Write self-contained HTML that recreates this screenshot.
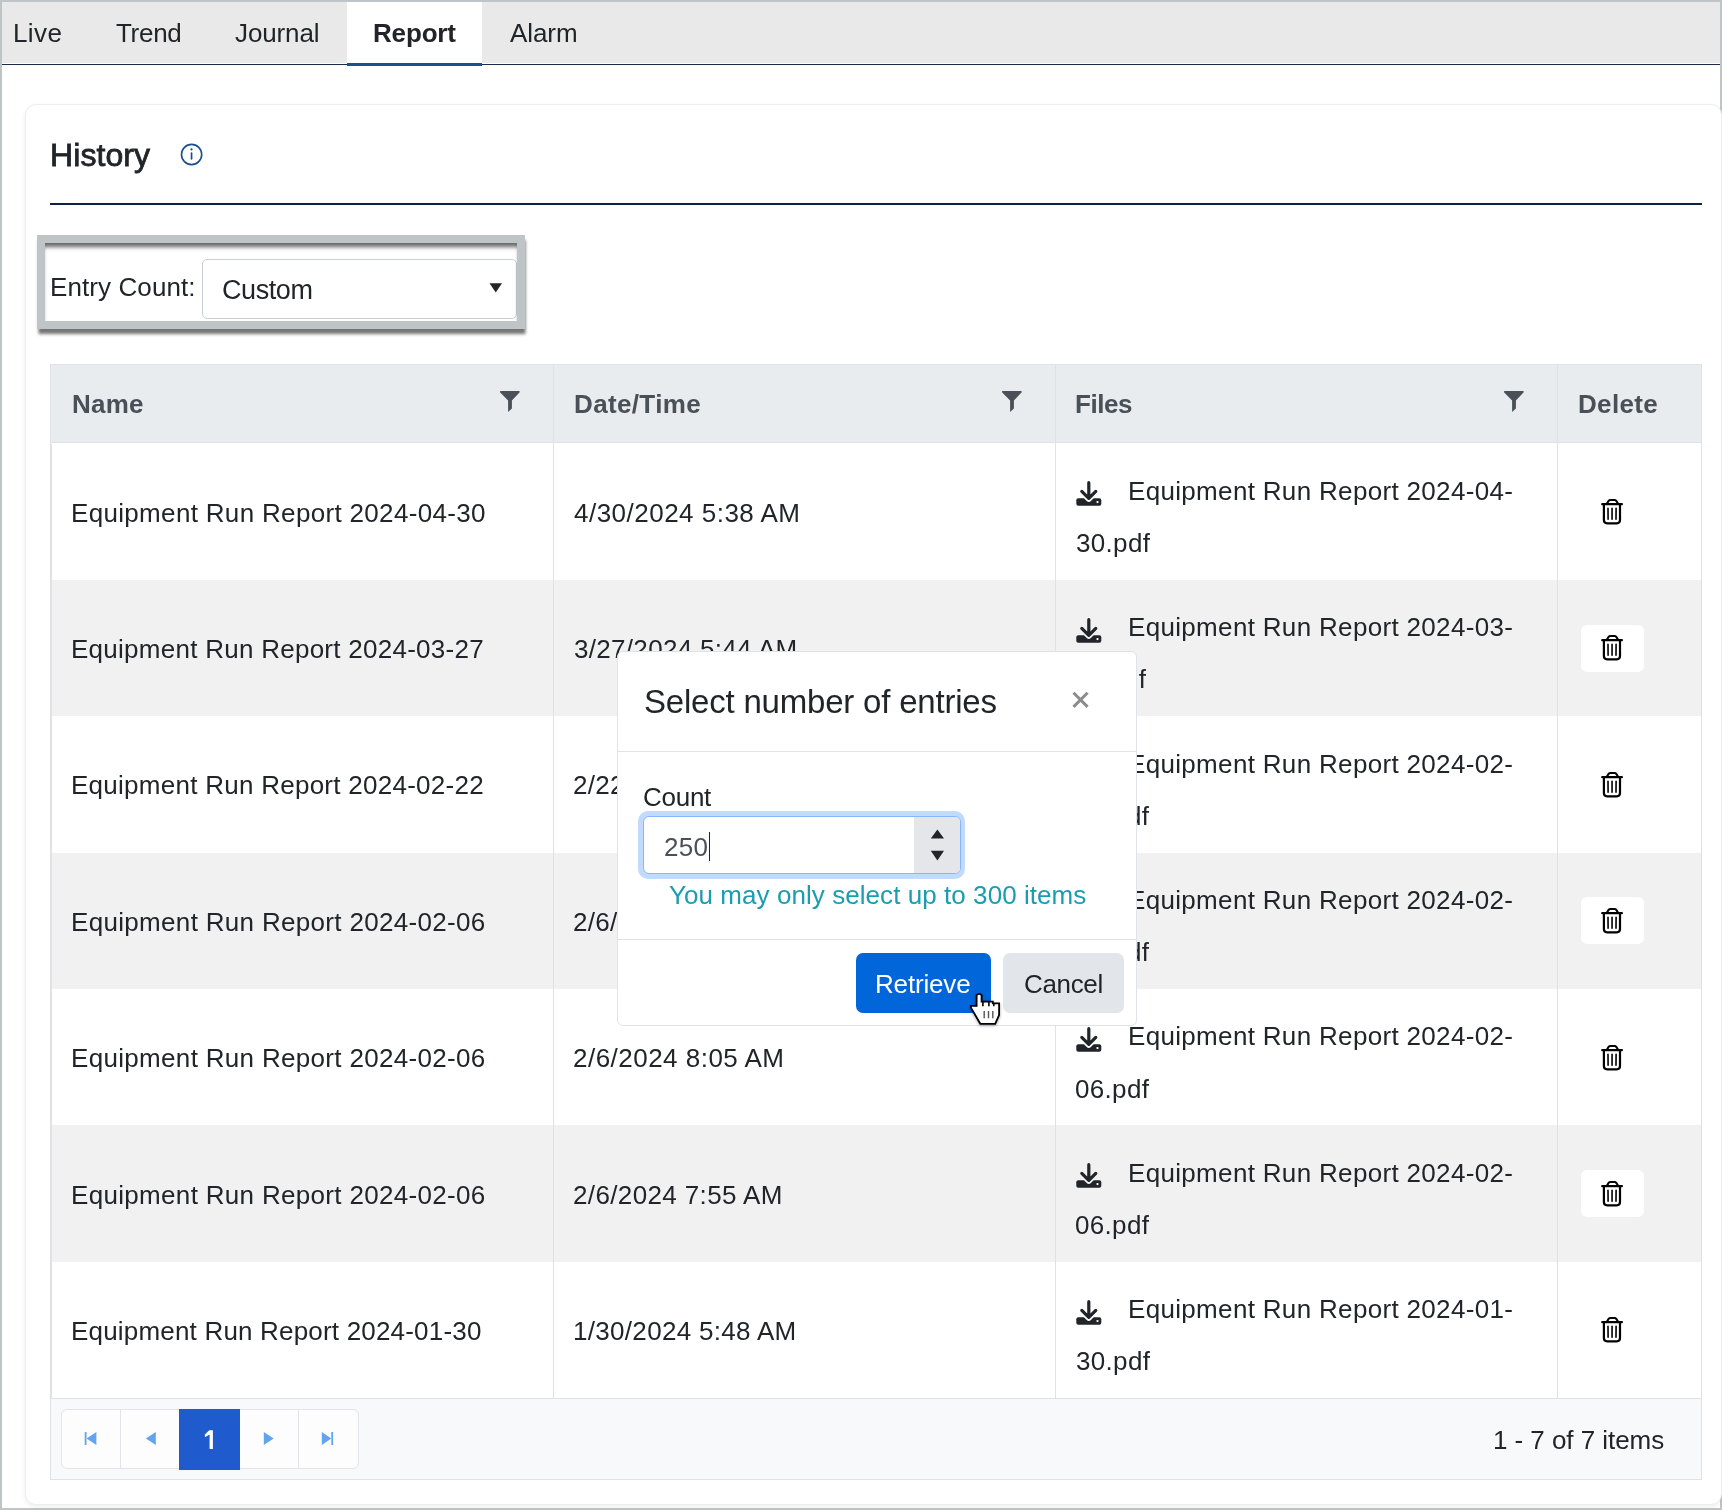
<!DOCTYPE html>
<html><head><meta charset="utf-8">
<style>
html,body{margin:0;padding:0;}
body{width:1722px;height:1510px;position:relative;overflow:hidden;background:#bfc4c7;font-family:"Liberation Sans",sans-serif;}
.a{position:absolute;}
.t{position:absolute;white-space:pre;font-family:"Liberation Sans",sans-serif;-webkit-font-smoothing:antialiased;will-change:transform;}
svg{position:absolute;overflow:visible;}
</style></head><body>
<div class="a" style="left:2px;top:2px;width:1718px;height:1506px;background:#fff;"></div>
<!-- tab bar -->
<div class="a" style="left:2px;top:2px;width:1718px;height:61px;background:#e9e9e9;"></div>
<div class="a" style="left:2px;top:64px;width:1718px;height:1px;background:#1c2b47;"></div>
<div class="a" style="left:347px;top:2px;width:135px;height:61px;background:#fff;"></div>
<div class="a" style="left:347px;top:63px;width:135px;height:3px;background:#1a5190;"></div>
<!-- card -->
<div class="a" style="left:25px;top:103.5px;width:1697px;height:1401px;box-sizing:border-box;border:1px solid #eceef0;border-radius:11px;box-shadow:0 2px 5px rgba(0,0,0,0.07);background:#fff;"></div>
<!-- info icon -->
<svg style="left:0;top:0" width="1" height="1"><circle cx="191.6" cy="154.5" r="10.1" fill="none" stroke="#1a4f8f" stroke-width="1.6"/><circle cx="191.5" cy="149.4" r="1.1" fill="#1a4f8f"/><rect x="190.7" y="152.3" width="1.7" height="7.4" rx=".8" fill="#1a4f8f"/></svg>
<!-- divider -->
<div class="a" style="left:50px;top:203px;width:1652px;height:2px;background:#0d2240;"></div>
<!-- entry count select -->
<div class="a" style="left:202px;top:259px;width:315px;height:59.5px;box-sizing:border-box;border:1px solid #c9cfd7;border-radius:5px;background:#fff;"></div>
<svg style="left:0;top:0" width="1" height="1"><path d="M489.5 283.2 L502 283.2 L495.75 292.4 Z" fill="#212529"/></svg>
<!-- frame -->
<div class="a" style="left:37px;top:235px;width:487.5px;height:94px;box-sizing:border-box;border:8px solid #bfc4c6;box-shadow:inset 0 6px 4px -2px rgba(0,0,0,0.6), 0.5px 5px 3px rgba(0,0,0,0.55);"></div>
<!-- table -->
<div class="a" style="left:50px;top:364px;width:1652px;height:1116px;box-sizing:border-box;border:1px solid #dee2e6;background:#fff;"></div>
<div class="a" style="left:51px;top:365px;width:1650px;height:77px;background:#e9ecef;"></div>
<div class="a" style="left:51px;top:442px;width:1650px;height:2px;background:#dee2e6;"></div>
<div class="a" style="left:51px;top:443.4px;width:1650px;height:136.4px;background:#ffffff;"></div>
<div class="a" style="left:51px;top:579.8px;width:1650px;height:136.4px;background:#f1f1f1;"></div>
<div class="a" style="left:51px;top:716.2px;width:1650px;height:136.4px;background:#ffffff;"></div>
<div class="a" style="left:51px;top:852.6px;width:1650px;height:136.4px;background:#f1f1f1;"></div>
<div class="a" style="left:51px;top:989.0px;width:1650px;height:136.4px;background:#ffffff;"></div>
<div class="a" style="left:51px;top:1125.4px;width:1650px;height:136.4px;background:#f1f1f1;"></div>
<div class="a" style="left:51px;top:1261.8px;width:1650px;height:136.2px;background:#ffffff;"></div>
<div class="a" style="left:51px;top:444px;width:1px;height:954px;background:#e0e2e4;"></div>
<div class="a" style="left:553px;top:365px;width:1px;height:1033px;background:#dee2e6;"></div>
<div class="a" style="left:1055px;top:365px;width:1px;height:1033px;background:#dee2e6;"></div>
<div class="a" style="left:1557px;top:365px;width:1px;height:1033px;background:#dee2e6;"></div>
<div class="a" style="left:51px;top:1398px;width:1650px;height:1px;background:#dee2e6;"></div>
<div class="a" style="left:51px;top:1399px;width:1650px;height:80px;background:#f8f9fa;"></div>
<svg style="left:1076px;top:480.3px" width="26" height="26" viewBox="0 0 26 26"><defs><mask id="m0"><rect x="-2" y="-2" width="30" height="30" fill="#fff"/><path d="M5.8 11.4 L12.8 18.4 L19.8 11.4" stroke="#000" stroke-width="6.6" fill="none" stroke-linecap="round" stroke-linejoin="round"/></mask></defs><rect x="0.3" y="18.2" width="25" height="7.6" rx="2" fill="#212529" mask="url(#m0)"/><circle cx="21.5" cy="22.1" r="1.15" fill="#fff"/><path d="M12.8 2.7 V16.5 M5.8 11.4 L12.8 18.4 L19.8 11.4" stroke="#212529" stroke-width="3.2" fill="none" stroke-linecap="round" stroke-linejoin="round"/></svg>
<svg style="left:1601px;top:499.0px" width="22" height="26" viewBox="0 0 22 26" fill="none" stroke="#000"><path d="M1.2 5.2 H20.9" stroke-width="2.2" stroke-linecap="round"/><path d="M5.6 5 L7.6 1.9 Q8.3 1 9.4 1 H13.5 Q14.6 1 15.3 1.9 L17.3 5" stroke-width="2"/><path d="M2.9 6 V21 Q2.9 24.3 6.2 24.3 H15.7 Q19 24.3 19 21 V6" stroke-width="2.2"/><path d="M7 9.3 L7.1 20.3 M11.05 9.3 V20.3 M15.1 9.3 L15 20.3" stroke-width="1.6" stroke-linecap="round"/></svg>
<div class="a" style="left:1581px;top:624.5px;width:63px;height:47px;border-radius:6px;background:#fff;"></div>
<svg style="left:1076px;top:616.7px" width="26" height="26" viewBox="0 0 26 26"><defs><mask id="m1"><rect x="-2" y="-2" width="30" height="30" fill="#fff"/><path d="M5.8 11.4 L12.8 18.4 L19.8 11.4" stroke="#000" stroke-width="6.6" fill="none" stroke-linecap="round" stroke-linejoin="round"/></mask></defs><rect x="0.3" y="18.2" width="25" height="7.6" rx="2" fill="#212529" mask="url(#m1)"/><circle cx="21.5" cy="22.1" r="1.15" fill="#fff"/><path d="M12.8 2.7 V16.5 M5.8 11.4 L12.8 18.4 L19.8 11.4" stroke="#212529" stroke-width="3.2" fill="none" stroke-linecap="round" stroke-linejoin="round"/></svg>
<svg style="left:1601px;top:635.4px" width="22" height="26" viewBox="0 0 22 26" fill="none" stroke="#000"><path d="M1.2 5.2 H20.9" stroke-width="2.2" stroke-linecap="round"/><path d="M5.6 5 L7.6 1.9 Q8.3 1 9.4 1 H13.5 Q14.6 1 15.3 1.9 L17.3 5" stroke-width="2"/><path d="M2.9 6 V21 Q2.9 24.3 6.2 24.3 H15.7 Q19 24.3 19 21 V6" stroke-width="2.2"/><path d="M7 9.3 L7.1 20.3 M11.05 9.3 V20.3 M15.1 9.3 L15 20.3" stroke-width="1.6" stroke-linecap="round"/></svg>
<svg style="left:1076px;top:753.1px" width="26" height="26" viewBox="0 0 26 26"><defs><mask id="m2"><rect x="-2" y="-2" width="30" height="30" fill="#fff"/><path d="M5.8 11.4 L12.8 18.4 L19.8 11.4" stroke="#000" stroke-width="6.6" fill="none" stroke-linecap="round" stroke-linejoin="round"/></mask></defs><rect x="0.3" y="18.2" width="25" height="7.6" rx="2" fill="#212529" mask="url(#m2)"/><circle cx="21.5" cy="22.1" r="1.15" fill="#fff"/><path d="M12.8 2.7 V16.5 M5.8 11.4 L12.8 18.4 L19.8 11.4" stroke="#212529" stroke-width="3.2" fill="none" stroke-linecap="round" stroke-linejoin="round"/></svg>
<svg style="left:1601px;top:771.8px" width="22" height="26" viewBox="0 0 22 26" fill="none" stroke="#000"><path d="M1.2 5.2 H20.9" stroke-width="2.2" stroke-linecap="round"/><path d="M5.6 5 L7.6 1.9 Q8.3 1 9.4 1 H13.5 Q14.6 1 15.3 1.9 L17.3 5" stroke-width="2"/><path d="M2.9 6 V21 Q2.9 24.3 6.2 24.3 H15.7 Q19 24.3 19 21 V6" stroke-width="2.2"/><path d="M7 9.3 L7.1 20.3 M11.05 9.3 V20.3 M15.1 9.3 L15 20.3" stroke-width="1.6" stroke-linecap="round"/></svg>
<div class="a" style="left:1581px;top:897.3px;width:63px;height:47px;border-radius:6px;background:#fff;"></div>
<svg style="left:1076px;top:889.5px" width="26" height="26" viewBox="0 0 26 26"><defs><mask id="m3"><rect x="-2" y="-2" width="30" height="30" fill="#fff"/><path d="M5.8 11.4 L12.8 18.4 L19.8 11.4" stroke="#000" stroke-width="6.6" fill="none" stroke-linecap="round" stroke-linejoin="round"/></mask></defs><rect x="0.3" y="18.2" width="25" height="7.6" rx="2" fill="#212529" mask="url(#m3)"/><circle cx="21.5" cy="22.1" r="1.15" fill="#fff"/><path d="M12.8 2.7 V16.5 M5.8 11.4 L12.8 18.4 L19.8 11.4" stroke="#212529" stroke-width="3.2" fill="none" stroke-linecap="round" stroke-linejoin="round"/></svg>
<svg style="left:1601px;top:908.2px" width="22" height="26" viewBox="0 0 22 26" fill="none" stroke="#000"><path d="M1.2 5.2 H20.9" stroke-width="2.2" stroke-linecap="round"/><path d="M5.6 5 L7.6 1.9 Q8.3 1 9.4 1 H13.5 Q14.6 1 15.3 1.9 L17.3 5" stroke-width="2"/><path d="M2.9 6 V21 Q2.9 24.3 6.2 24.3 H15.7 Q19 24.3 19 21 V6" stroke-width="2.2"/><path d="M7 9.3 L7.1 20.3 M11.05 9.3 V20.3 M15.1 9.3 L15 20.3" stroke-width="1.6" stroke-linecap="round"/></svg>
<svg style="left:1076px;top:1025.9px" width="26" height="26" viewBox="0 0 26 26"><defs><mask id="m4"><rect x="-2" y="-2" width="30" height="30" fill="#fff"/><path d="M5.8 11.4 L12.8 18.4 L19.8 11.4" stroke="#000" stroke-width="6.6" fill="none" stroke-linecap="round" stroke-linejoin="round"/></mask></defs><rect x="0.3" y="18.2" width="25" height="7.6" rx="2" fill="#212529" mask="url(#m4)"/><circle cx="21.5" cy="22.1" r="1.15" fill="#fff"/><path d="M12.8 2.7 V16.5 M5.8 11.4 L12.8 18.4 L19.8 11.4" stroke="#212529" stroke-width="3.2" fill="none" stroke-linecap="round" stroke-linejoin="round"/></svg>
<svg style="left:1601px;top:1044.6px" width="22" height="26" viewBox="0 0 22 26" fill="none" stroke="#000"><path d="M1.2 5.2 H20.9" stroke-width="2.2" stroke-linecap="round"/><path d="M5.6 5 L7.6 1.9 Q8.3 1 9.4 1 H13.5 Q14.6 1 15.3 1.9 L17.3 5" stroke-width="2"/><path d="M2.9 6 V21 Q2.9 24.3 6.2 24.3 H15.7 Q19 24.3 19 21 V6" stroke-width="2.2"/><path d="M7 9.3 L7.1 20.3 M11.05 9.3 V20.3 M15.1 9.3 L15 20.3" stroke-width="1.6" stroke-linecap="round"/></svg>
<div class="a" style="left:1581px;top:1170.1px;width:63px;height:47px;border-radius:6px;background:#fff;"></div>
<svg style="left:1076px;top:1162.3px" width="26" height="26" viewBox="0 0 26 26"><defs><mask id="m5"><rect x="-2" y="-2" width="30" height="30" fill="#fff"/><path d="M5.8 11.4 L12.8 18.4 L19.8 11.4" stroke="#000" stroke-width="6.6" fill="none" stroke-linecap="round" stroke-linejoin="round"/></mask></defs><rect x="0.3" y="18.2" width="25" height="7.6" rx="2" fill="#212529" mask="url(#m5)"/><circle cx="21.5" cy="22.1" r="1.15" fill="#fff"/><path d="M12.8 2.7 V16.5 M5.8 11.4 L12.8 18.4 L19.8 11.4" stroke="#212529" stroke-width="3.2" fill="none" stroke-linecap="round" stroke-linejoin="round"/></svg>
<svg style="left:1601px;top:1181.0px" width="22" height="26" viewBox="0 0 22 26" fill="none" stroke="#000"><path d="M1.2 5.2 H20.9" stroke-width="2.2" stroke-linecap="round"/><path d="M5.6 5 L7.6 1.9 Q8.3 1 9.4 1 H13.5 Q14.6 1 15.3 1.9 L17.3 5" stroke-width="2"/><path d="M2.9 6 V21 Q2.9 24.3 6.2 24.3 H15.7 Q19 24.3 19 21 V6" stroke-width="2.2"/><path d="M7 9.3 L7.1 20.3 M11.05 9.3 V20.3 M15.1 9.3 L15 20.3" stroke-width="1.6" stroke-linecap="round"/></svg>
<svg style="left:1076px;top:1298.7px" width="26" height="26" viewBox="0 0 26 26"><defs><mask id="m6"><rect x="-2" y="-2" width="30" height="30" fill="#fff"/><path d="M5.8 11.4 L12.8 18.4 L19.8 11.4" stroke="#000" stroke-width="6.6" fill="none" stroke-linecap="round" stroke-linejoin="round"/></mask></defs><rect x="0.3" y="18.2" width="25" height="7.6" rx="2" fill="#212529" mask="url(#m6)"/><circle cx="21.5" cy="22.1" r="1.15" fill="#fff"/><path d="M12.8 2.7 V16.5 M5.8 11.4 L12.8 18.4 L19.8 11.4" stroke="#212529" stroke-width="3.2" fill="none" stroke-linecap="round" stroke-linejoin="round"/></svg>
<svg style="left:1601px;top:1317.4px" width="22" height="26" viewBox="0 0 22 26" fill="none" stroke="#000"><path d="M1.2 5.2 H20.9" stroke-width="2.2" stroke-linecap="round"/><path d="M5.6 5 L7.6 1.9 Q8.3 1 9.4 1 H13.5 Q14.6 1 15.3 1.9 L17.3 5" stroke-width="2"/><path d="M2.9 6 V21 Q2.9 24.3 6.2 24.3 H15.7 Q19 24.3 19 21 V6" stroke-width="2.2"/><path d="M7 9.3 L7.1 20.3 M11.05 9.3 V20.3 M15.1 9.3 L15 20.3" stroke-width="1.6" stroke-linecap="round"/></svg>
<svg style="left:500.2px;top:391px" width="20" height="21" viewBox="0 0 20 21"><path d="M0 0.6 Q0 0 0.6 0 H19.1 Q19.7 0 19.7 0.6 V1.3 L11.9 9.5 V17.4 L8.1 20.9 V9.5 L0 1.3 Z" fill="#495057"/></svg>
<svg style="left:1002.2px;top:391px" width="20" height="21" viewBox="0 0 20 21"><path d="M0 0.6 Q0 0 0.6 0 H19.1 Q19.7 0 19.7 0.6 V1.3 L11.9 9.5 V17.4 L8.1 20.9 V9.5 L0 1.3 Z" fill="#495057"/></svg>
<svg style="left:1504.1px;top:391px" width="20" height="21" viewBox="0 0 20 21"><path d="M0 0.6 Q0 0 0.6 0 H19.1 Q19.7 0 19.7 0.6 V1.3 L11.9 9.5 V17.4 L8.1 20.9 V9.5 L0 1.3 Z" fill="#495057"/></svg>
<!-- pager -->
<div class="a" style="left:61.3px;top:1409px;width:297.6px;height:60.3px;box-sizing:border-box;border:1px solid #e1e4e8;border-radius:6px;background:#fdfdfd;"></div>
<div class="a" style="left:120.3px;top:1410px;width:1px;height:58.3px;background:#e1e4e8;"></div>
<div class="a" style="left:298.4px;top:1410px;width:1px;height:58.3px;background:#e1e4e8;"></div>
<div class="a" style="left:179px;top:1409px;width:61px;height:60.5px;background:#1f5bcc;"></div>
<svg style="left:0;top:0" width="1" height="1" fill="#62a4ef">
<rect x="84.7" y="1432" width="1.8" height="13"/><path d="M86.5 1438.5 L96.4 1432 L96.4 1445 Z"/>
<path d="M145.9 1438.5 L155.8 1432 L155.8 1445 Z"/>
<path d="M273.7 1438.5 L263.8 1432 L263.8 1445 Z"/>
<rect x="331.3" y="1432" width="1.8" height="13"/><path d="M331.3 1438.5 L321.8 1432 L321.8 1445 Z"/>
</svg>
<div class="t" style="left:12.60px;top:20px;font-size:26px;line-height:26px;color:#212529;letter-spacing:0.388px;">Live</div>
<div class="t" style="left:115.70px;top:20px;font-size:26px;line-height:26px;color:#212529;letter-spacing:-0.299px;">Trend</div>
<div class="t" style="left:235.00px;top:20px;font-size:26px;line-height:26px;color:#212529;letter-spacing:-0.116px;">Journal</div>
<div class="t" style="left:372.60px;top:20px;font-size:26px;line-height:26px;color:#212529;font-weight:bold;letter-spacing:-0.164px;">Report</div>
<div class="t" style="left:509.50px;top:20px;font-size:26px;line-height:26px;color:#212529;letter-spacing:-0.084px;">Alarm</div>
<div class="t" style="left:50.20px;top:139px;font-size:32px;line-height:32px;color:#212529;letter-spacing:0.090px;-webkit-text-stroke:0.8px #212529;">History</div>
<div class="t" style="left:50.20px;top:274px;font-size:26px;line-height:26px;color:#212529;letter-spacing:0.092px;">Entry Count:</div>
<div class="t" style="left:221.70px;top:277px;font-size:27px;line-height:27px;color:#212529;letter-spacing:-0.426px;">Custom</div>
<div class="t" style="left:72.10px;top:391px;font-size:26px;line-height:26px;color:#495057;font-weight:bold;letter-spacing:0.215px;">Name</div>
<div class="t" style="left:574.10px;top:391px;font-size:26px;line-height:26px;color:#495057;font-weight:bold;letter-spacing:0.358px;">Date/Time</div>
<div class="t" style="left:1075.40px;top:391px;font-size:26px;line-height:26px;color:#495057;font-weight:bold;letter-spacing:-0.472px;">Files</div>
<div class="t" style="left:1577.90px;top:391px;font-size:26px;line-height:26px;color:#495057;font-weight:bold;letter-spacing:0.344px;">Delete</div>
<div class="t" style="left:70.80px;top:500px;font-size:26px;line-height:26px;color:#212529;letter-spacing:0.325px;">Equipment Run Report 2024-04-30</div>
<div class="t" style="left:574.30px;top:500px;font-size:26px;line-height:26px;color:#212529;letter-spacing:0.484px;">4/30/2024 5:38 AM</div>
<div class="t" style="left:1128.10px;top:478px;font-size:26px;line-height:26px;color:#212529;letter-spacing:0.325px;">Equipment Run Report 2024-04-</div>
<div class="t" style="left:1076.30px;top:530px;font-size:26px;line-height:26px;color:#212529;letter-spacing:0.325px;">30.pdf</div>
<div class="t" style="left:70.80px;top:636px;font-size:26px;line-height:26px;color:#212529;letter-spacing:0.265px;">Equipment Run Report 2024-03-27</div>
<div class="t" style="left:574.30px;top:636px;font-size:26px;line-height:26px;color:#212529;letter-spacing:0.309px;">3/27/2024 5:44 AM</div>
<div class="t" style="left:1128.10px;top:614px;font-size:26px;line-height:26px;color:#212529;letter-spacing:0.325px;">Equipment Run Report 2024-03-</div>
<div class="t" style="left:1071.80px;top:666px;font-size:26px;line-height:26px;color:#212529;letter-spacing:0.325px;">27.pdf</div>
<div class="t" style="left:70.80px;top:772px;font-size:26px;line-height:26px;color:#212529;letter-spacing:0.265px;">Equipment Run Report 2024-02-22</div>
<div class="t" style="left:573.30px;top:772px;font-size:26px;line-height:26px;color:#212529;letter-spacing:0.309px;">2/22/2024 5:50 AM</div>
<div class="t" style="left:1128.10px;top:751px;font-size:26px;line-height:26px;color:#212529;letter-spacing:0.325px;">Equipment Run Report 2024-02-</div>
<div class="t" style="left:1075.30px;top:803px;font-size:26px;line-height:26px;color:#212529;letter-spacing:0.325px;">22.pdf</div>
<div class="t" style="left:70.80px;top:909px;font-size:26px;line-height:26px;color:#212529;letter-spacing:0.319px;">Equipment Run Report 2024-02-06</div>
<div class="t" style="left:573.30px;top:909px;font-size:26px;line-height:26px;color:#212529;letter-spacing:0.309px;">2/6/2024 8:30 AM</div>
<div class="t" style="left:1128.10px;top:887px;font-size:26px;line-height:26px;color:#212529;letter-spacing:0.325px;">Equipment Run Report 2024-02-</div>
<div class="t" style="left:1075.30px;top:939px;font-size:26px;line-height:26px;color:#212529;letter-spacing:0.325px;">06.pdf</div>
<div class="t" style="left:70.80px;top:1045px;font-size:26px;line-height:26px;color:#212529;letter-spacing:0.319px;">Equipment Run Report 2024-02-06</div>
<div class="t" style="left:573.30px;top:1045px;font-size:26px;line-height:26px;color:#212529;letter-spacing:0.480px;">2/6/2024 8:05 AM</div>
<div class="t" style="left:1128.10px;top:1023px;font-size:26px;line-height:26px;color:#212529;letter-spacing:0.325px;">Equipment Run Report 2024-02-</div>
<div class="t" style="left:1075.30px;top:1076px;font-size:26px;line-height:26px;color:#212529;letter-spacing:0.325px;">06.pdf</div>
<div class="t" style="left:70.80px;top:1182px;font-size:26px;line-height:26px;color:#212529;letter-spacing:0.319px;">Equipment Run Report 2024-02-06</div>
<div class="t" style="left:573.30px;top:1182px;font-size:26px;line-height:26px;color:#212529;letter-spacing:0.367px;">2/6/2024 7:55 AM</div>
<div class="t" style="left:1128.10px;top:1160px;font-size:26px;line-height:26px;color:#212529;letter-spacing:0.325px;">Equipment Run Report 2024-02-</div>
<div class="t" style="left:1075.30px;top:1212px;font-size:26px;line-height:26px;color:#212529;letter-spacing:0.325px;">06.pdf</div>
<div class="t" style="left:70.80px;top:1318px;font-size:26px;line-height:26px;color:#212529;letter-spacing:0.189px;">Equipment Run Report 2024-01-30</div>
<div class="t" style="left:573.30px;top:1318px;font-size:26px;line-height:26px;color:#212529;letter-spacing:0.309px;">1/30/2024 5:48 AM</div>
<div class="t" style="left:1128.10px;top:1296px;font-size:26px;line-height:26px;color:#212529;letter-spacing:0.325px;">Equipment Run Report 2024-01-</div>
<div class="t" style="left:1076.30px;top:1348px;font-size:26px;line-height:26px;color:#212529;letter-spacing:0.325px;">30.pdf</div>
<div class="t" style="left:1493.40px;top:1427px;font-size:26px;line-height:26px;color:#212529;letter-spacing:-0.051px;">1 - 7 of 7 items</div>
<svg style="left:0;top:0" width="1" height="1"><path d="M209.6 1430.3 H212.9 V1448.9 H209.6 V1434.6 L204.9 1437.3 V1434.4 L209 1430.5 Z" fill="#fff"/></svg>
<!-- modal -->
<div class="a" style="left:617px;top:651.3px;width:519.5px;height:374.5px;box-sizing:border-box;border:1px solid #dfe3e8;border-radius:6px;background:#fff;"></div>
<div class="a" style="left:618px;top:751px;width:517.5px;height:1px;background:#dfe3e8;"></div>
<div class="a" style="left:618px;top:939px;width:517.5px;height:1px;background:#dfe3e8;"></div>
<svg style="left:0;top:0" width="1" height="1"><path d="M1073.5 692.7 L1087.6 706.9 M1087.6 692.7 L1073.5 706.9" stroke="#8c8c8c" stroke-width="3" stroke-linecap="butt"/></svg>
<div class="a" style="left:638px;top:811px;width:327.4px;height:68.3px;box-sizing:border-box;border-radius:10px;background:#c1dafd;"></div>
<div class="a" style="left:643px;top:816px;width:318px;height:58.2px;box-sizing:border-box;border:1px solid #86b7fe;border-radius:6px;background:#fff;overflow:hidden;"><div class="a" style="left:270px;top:0;width:47px;height:57px;background:#e4e6ea;"></div></div>
<svg style="left:0;top:0" width="1" height="1" fill="#212529"><path d="M930.8 838.6 L944 838.6 L937.4 829.5 Z"/><path d="M930.8 850.8 L944 850.8 L937.4 860.6 Z"/></svg>
<div class="a" style="left:708.8px;top:831.5px;width:1.3px;height:29px;background:#212529;"></div>
<div class="a" style="left:856px;top:953px;width:135px;height:59.8px;border-radius:7px;background:#0066d9;"></div>
<div class="a" style="left:1003px;top:953px;width:121px;height:59.8px;border-radius:7px;background:#e2e5e9;"></div>
<div class="t" style="left:643.50px;top:685px;font-size:33px;line-height:33px;color:#212529;letter-spacing:-0.204px;">Select number of entries</div>
<div class="t" style="left:643.00px;top:784px;font-size:26px;line-height:26px;color:#212529;letter-spacing:-0.264px;">Count</div>
<div class="t" style="left:663.60px;top:834px;font-size:26px;line-height:26px;color:#495057;letter-spacing:0.340px;">250</div>
<div class="t" style="left:668.90px;top:882px;font-size:26px;line-height:26px;color:#1b9db0;letter-spacing:0.060px;">You may only select up to 300 items</div>
<div class="t" style="left:874.60px;top:971px;font-size:26px;line-height:26px;color:#ffffff;letter-spacing:-0.165px;">Retrieve</div>
<div class="t" style="left:1023.70px;top:971px;font-size:26px;line-height:26px;color:#212529;letter-spacing:-0.331px;">Cancel</div>
<svg style="left:970px;top:993px;filter:drop-shadow(0 1.5px 1.5px rgba(0,0,0,0.35))" width="31" height="33" viewBox="0 0 31 33"><path d="M6.6 2.2 Q9.1 -0.6 11.6 2.2 V8.6 H22.8 V10.3 H29.1 V22 L25.2 30.8 H10.3 L0.9 14.6 V12.9 H6.6 Z" fill="#fff" stroke="#000" stroke-width="1.8" stroke-linejoin="miter"/><path d="M12.9 8.6 V13.2 M18.9 8.6 V13.2 M23.8 10.3 V13.2" stroke="#000" stroke-width="1.6"/><path d="M14.2 18 V25.2 M18.5 18 V25.2 M22.8 18 V25.2" stroke="#555" stroke-width="1.4"/></svg>
</body></html>
